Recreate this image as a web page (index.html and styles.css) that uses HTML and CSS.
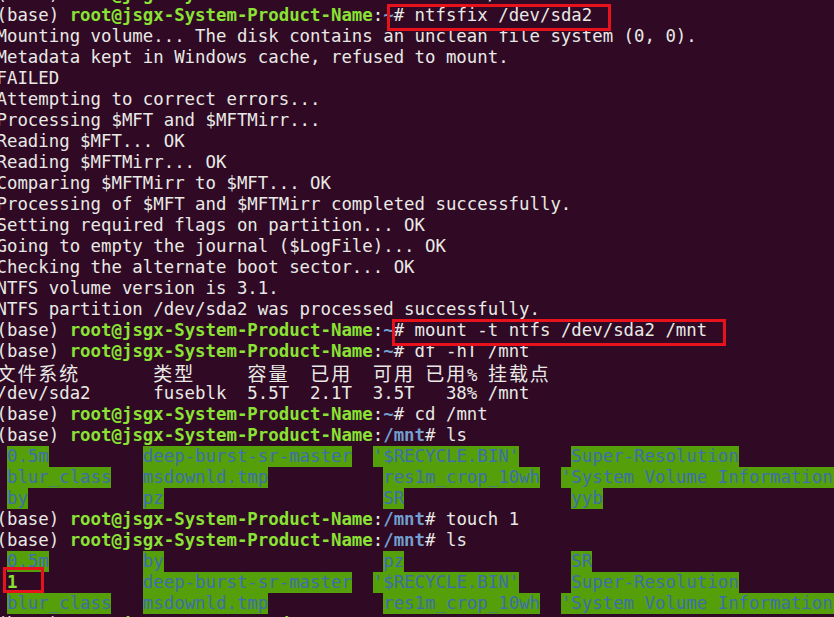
FILE: index.html
```html
<!DOCTYPE html>
<html lang="zh-CN">
<head>
<meta charset="utf-8">
<title>Terminal</title>
<link rel="stylesheet" href="styles.css">
</head>
<body>
<div class="screen">
<div class="term">
<div class="ln">(base) <b class="u">root@jsgx-System-Product-Name</b>:<b class="d">~</b># umount /mnt</div>
<div class="ln">(base) <b class="u">root@jsgx-System-Product-Name</b>:<b class="d">~</b># ntfsfix /dev/sda2</div>
<div class="ln">Mounting volume... The disk contains an unclean file system (0, 0).</div>
<div class="ln">Metadata kept in Windows cache, refused to mount.</div>
<div class="ln">FAILED</div>
<div class="ln">Attempting to correct errors...</div>
<div class="ln">Processing $MFT and $MFTMirr...</div>
<div class="ln">Reading $MFT... OK</div>
<div class="ln">Reading $MFTMirr... OK</div>
<div class="ln">Comparing $MFTMirr to $MFT... OK</div>
<div class="ln">Processing of $MFT and $MFTMirr completed successfully.</div>
<div class="ln">Setting required flags on partition... OK</div>
<div class="ln">Going to empty the journal ($LogFile)... OK</div>
<div class="ln">Checking the alternate boot sector... OK</div>
<div class="ln">NTFS volume version is 3.1.</div>
<div class="ln">NTFS partition /dev/sda2 was processed successfully.</div>
<div class="ln">(base) <b class="u">root@jsgx-System-Product-Name</b>:<b class="d">~</b># mount -t ntfs /dev/sda2 /mnt</div>
<div class="ln">(base) <b class="u">root@jsgx-System-Product-Name</b>:<b class="d">~</b># df -hT /mnt</div>
<div class="ln"><span class="cj">文件系统</span>       <span class="cj">类型</span>     <span class="cj">容量</span>  <span class="cj">已用</span>  <span class="cj">可用</span> <span class="cj">已用</span>% <span class="cj">挂载点</span></div>
<div class="ln">/dev/sda2      fuseblk  5.5T  2.1T  3.5T   38% /mnt</div>
<div class="ln">(base) <b class="u">root@jsgx-System-Product-Name</b>:<b class="d">~</b># cd /mnt</div>
<div class="ln">(base) <b class="u">root@jsgx-System-Product-Name</b>:<b class="d">/mnt</b># ls</div>
<div class="ln"> <span class="hl">0.5m</span>         <span class="hl">deep-burst-sr-master</span>  <span class="hl">'$RECYCLE.BIN'</span>     <span class="hl">Super-Resolution</span></div>
<div class="ln"> <span class="hl">blur_class</span>   <span class="hl">msdownld.tmp</span>           <span class="hl">res1m_crop_10wh</span>  <span class="hl">'System Volume Information'</span></div>
<div class="ln"> <span class="hl">by</span>           <span class="hl">pz</span>                     <span class="hl">SR</span>                <span class="hl">yyb</span></div>
<div class="ln">(base) <b class="u">root@jsgx-System-Product-Name</b>:<b class="d">/mnt</b># touch 1</div>
<div class="ln">(base) <b class="u">root@jsgx-System-Product-Name</b>:<b class="d">/mnt</b># ls</div>
<div class="ln"> <span class="hl">0.5m</span>         <span class="hl">by</span>                     <span class="hl">pz</span>                <span class="hl">SR</span></div>
<div class="ln"> <b class="u">1</b>            <span class="hl">deep-burst-sr-master</span>  <span class="hl">'$RECYCLE.BIN'</span>     <span class="hl">Super-Resolution</span></div>
<div class="ln"> <span class="hl">blur_class</span>   <span class="hl">msdownld.tmp</span>           <span class="hl">res1m_crop_10wh</span>  <span class="hl">'System Volume Information'</span></div>
<div class="ln">(base) <b class="u">root@jsgx-System-Product-Name</b>:<b class="d">/mnt</b># </div>
</div>
<div class="mark mark-1"></div>
<div class="mark mark-2"></div>
<div class="mark mark-3"></div>
</div>
</body>
</html>
```
FILE: styles.css
```css
html, body {
  margin: 0;
  padding: 0;
  background: #300a24;
  overflow: hidden;
}

.screen {
  position: relative;
  width: 834px;
  height: 617px;
  overflow: hidden;
  background: #300a24;
}

.term {
  margin: -16px 0 0 -3.5px;
  font-family: "DejaVu Sans Mono", "Liberation Mono", monospace;
  font-size: 17.375px;
  color: #e9e9e6;
}

.ln {
  height: 21px;
  line-height: 21px;
  white-space: pre;
}

.u {
  color: #8ae234;
  font-weight: bold;
}

.d {
  color: #729fcf;
  font-weight: bold;
}

.hl {
  display: inline-block;
  height: 21px;
  vertical-align: top;
  background: #55a00a;
  color: #3b6fae;
}

.cj {
  font-family: "Noto Sans CJK SC", "Noto Sans CJK TC", sans-serif;
  font-size: 19px;
  letter-spacing: 1.92px;
}

.mark {
  position: absolute;
  border: 3px solid #e8121c;
  box-sizing: border-box;
}

.mark-1 {
  left: 387px;
  top: 4px;
  width: 224px;
  height: 27px;
}

.mark-2 {
  left: 392px;
  top: 319px;
  width: 334px;
  height: 27px;
}

.mark-3 {
  left: 3px;
  top: 567px;
  width: 41px;
  height: 26px;
}
```
